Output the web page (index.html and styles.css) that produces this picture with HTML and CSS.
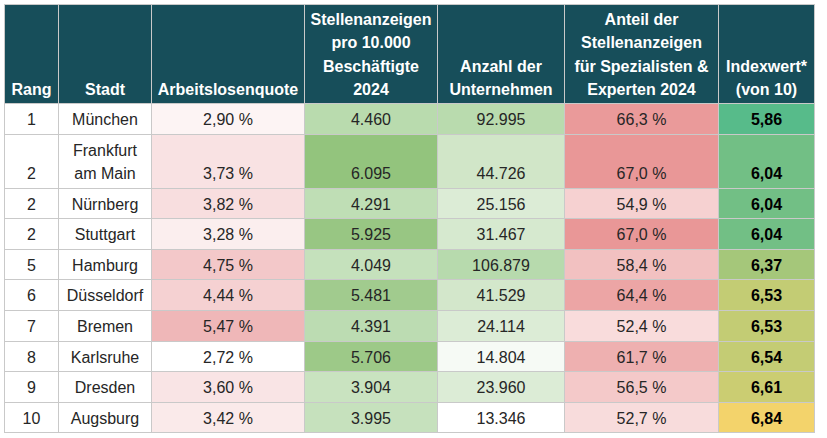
FILE: index.html
```html
<!DOCTYPE html>
<html lang="de">
<head>
<meta charset="utf-8">
<title>Ranking</title>
<link rel="stylesheet" href="styles.css">
</head>
<body>
<table class="rank">
  <colgroup>
    <col class="c-rang"><col class="c-stadt"><col class="c-alq"><col class="c-stell"><col class="c-unt"><col class="c-spez"><col class="c-idx">
  </colgroup>
  <thead>
    <tr>
      <th>Rang</th>
      <th>Stadt</th>
      <th>Arbeitslosenquote</th>
      <th>Stellenanzeigen<br>pro 10.000<br>Beschäftigte<br>2024</th>
      <th>Anzahl der<br>Unternehmen</th>
      <th>Anteil der<br>Stellenanzeigen<br>für Spezialisten &amp;<br>Experten 2024</th>
      <th>Indexwert*<br>(von 10)</th>
    </tr>
  </thead>
  <tbody>
    <tr><td>1</td><td>München</td><td style="background:#fdf4f4">2,90 %</td><td style="background:#b9dbae">4.460</td><td style="background:#b9dbae">92.995</td><td style="background:#ea9a9a">66,3 %</td><td class="idx" style="background:#57bb8a">5,86</td></tr>
    <tr><td>2</td><td>Frankfurt<br>am Main</td><td style="background:#f9e2e3">3,73 %</td><td style="background:#93c47d">6.095</td><td style="background:#d1e6c8">44.726</td><td style="background:#e99797">67,0 %</td><td class="idx" style="background:#72bf85">6,04</td></tr>
    <tr><td>2</td><td>Nürnberg</td><td style="background:#f8dedf">3,82 %</td><td style="background:#bfdeb5">4.291</td><td style="background:#dcecd6">25.156</td><td style="background:#f6d1d1">54,9 %</td><td class="idx" style="background:#72bf85">6,04</td></tr>
    <tr><td>2</td><td>Stuttgart</td><td style="background:#fbeeee">3,28 %</td><td style="background:#98c683">5.925</td><td style="background:#d6e9cf">31.467</td><td style="background:#e99797">67,0 %</td><td class="idx" style="background:#72bf85">6,04</td></tr>
    <tr><td>5</td><td>Hamburg</td><td style="background:#f3c8c9">4,75 %</td><td style="background:#c5e1bc">4.049</td><td style="background:#b7daad">106.879</td><td style="background:#f2c1c1">58,4 %</td><td class="idx" style="background:#a5c77a">6,37</td></tr>
    <tr><td>6</td><td>Düsseldorf</td><td style="background:#f5d1d2">4,44 %</td><td style="background:#a1cb8e">5.481</td><td style="background:#d3e7cb">41.529</td><td style="background:#eca5a5">64,4 %</td><td class="idx" style="background:#c3cc74">6,53</td></tr>
    <tr><td>7</td><td>Bremen</td><td style="background:#efb7b8">5,47 %</td><td style="background:#bcdcb2">4.391</td><td style="background:#dcecd6">24.114</td><td style="background:#f9dcdc">52,4 %</td><td class="idx" style="background:#c3cc74">6,53</td></tr>
    <tr><td>8</td><td>Karlsruhe</td><td style="background:#ffffff">2,72 %</td><td style="background:#9dc988">5.706</td><td style="background:#f6faf5">14.804</td><td style="background:#eeb0b0">61,7 %</td><td class="idx" style="background:#c4cc74">6,54</td></tr>
    <tr><td>9</td><td>Dresden</td><td style="background:#f9e4e5">3,60 %</td><td style="background:#c9e3c0">3.904</td><td style="background:#dcecd6">23.960</td><td style="background:#f4c9c9">56,5 %</td><td class="idx" style="background:#cbcd72">6,61</td></tr>
    <tr><td>10</td><td>Augsburg</td><td style="background:#faeaea">3,42 %</td><td style="background:#c6e1bd">3.995</td><td style="background:#ffffff">13.346</td><td style="background:#f8dcdc">52,7 %</td><td class="idx" style="background:#f3d36b">6,84</td></tr>
  </tbody>
</table>
</body>
</html>
```
FILE: styles.css
```css
html, body {
  margin: 0;
  padding: 0;
  background: #ffffff;
}
body {
  padding: 4px 0 0 4px;
  font-family: "Liberation Sans", Arial, sans-serif;
  font-size: 16px;
  color: #262626;
}
.rank {
  border-collapse: collapse;
  table-layout: fixed;
  width: 810px;
}
.c-rang { width: 54px; }
.c-stadt { width: 93px; }
.c-alq { width: 153px; }
.c-stell { width: 133px; }
.c-unt { width: 127px; }
.c-spez { width: 154px; }
.c-idx { width: 96px; }
.rank th,
.rank td {
  border: 1px solid #c9c9c9;
  text-align: center;
  vertical-align: bottom;
  white-space: nowrap;
  overflow: hidden;
}
.rank th {
  background: #174e5a;
  color: #ffffff;
  font-weight: bold;
  line-height: 23.3px;
  padding: 3px 2px 2px;
}
.rank td {
  line-height: 23.3px;
  padding: 4px 2px 2.3px;
}
.rank td.idx {
  font-weight: bold;
  color: #000000;
}
```
